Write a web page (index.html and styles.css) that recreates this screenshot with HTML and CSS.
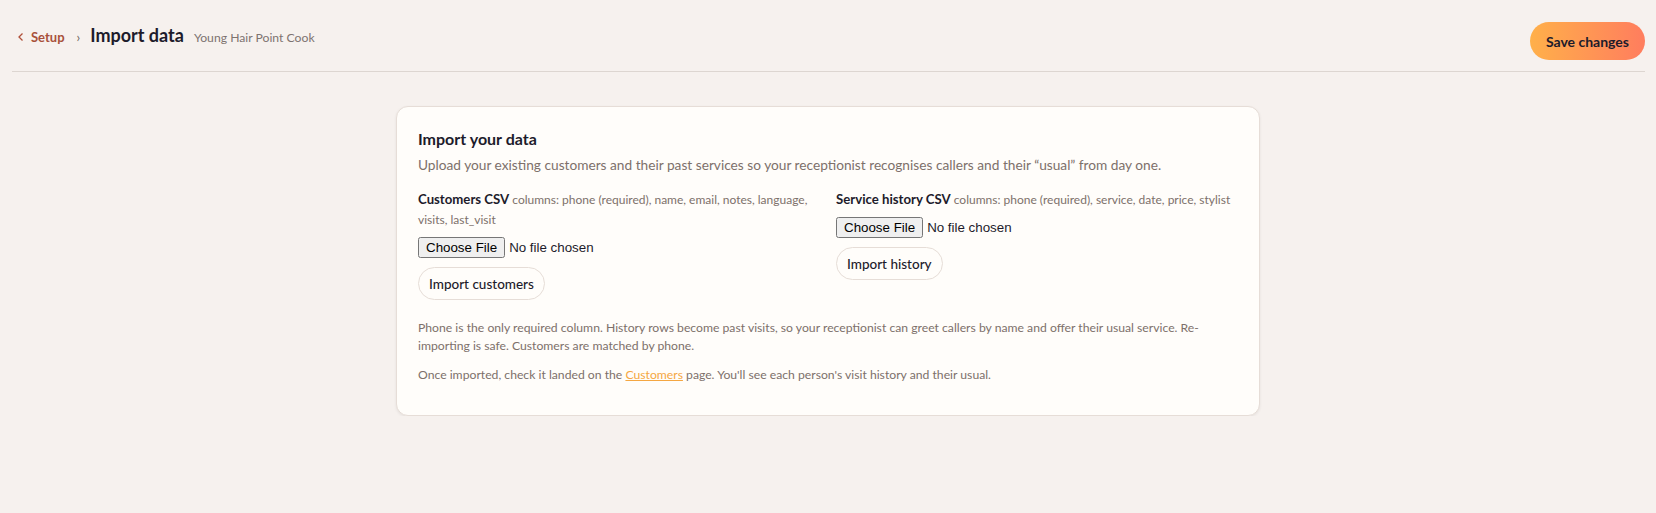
FILE: index.html
```html
<!DOCTYPE html>
<html lang="en">
<head>
    <meta charset="UTF-8">
    <title>Import data</title>
    <link rel="stylesheet" href="styles.css">
</head>
<body>
    <!-- Top bar -->
    <header class="topbar">
        <div class="crumbs">
            <a class="back" href="#">
                <svg width="8" height="10" viewBox="0 0 8 10"><path d="M5.5 1.5 2 5l3.5 3.5" fill="none" stroke="#b0503a" stroke-width="1.3"/></svg>
                Setup
            </a>
            <span class="sep">›</span>
            <h1 class="page-title">Import data</h1>
            <span class="salon">Young Hair Point Cook</span>
        </div>
        <button class="btn-save">Save changes</button>
    </header>

    <main class="wrap">
        <section class="card">
            <h2 class="card-title">Import your data</h2>
            <p class="card-desc">Upload your existing customers and their past services so your receptionist recognises callers and their “usual” from day one.</p>

            <div class="cols">
                <div class="col">
                    <div class="label"><strong>Customers CSV</strong> columns: phone (required), name, email, notes, language, visits, last_visit</div>
                    <input type="file" class="file">
                    <button class="btn-pill">Import customers</button>
                </div>
                <div class="col">
                    <div class="label"><strong>Service history CSV</strong> columns: phone (required), service, date, price, stylist</div>
                    <input type="file" class="file">
                    <button class="btn-pill">Import history</button>
                </div>
            </div>

            <p class="note">Phone is the only required column. History rows become past visits, so your receptionist can greet callers by name and offer their usual service. Re-importing is safe. Customers are matched by phone.</p>
            <p class="note">Once imported, check it landed on the <a href="#">Customers</a> page. You'll see each person's visit history and their usual.</p>
        </section>
    </main>
</body>
</html>
```

FILE: styles.css
```css
body {
    margin: 0;
    background: #f6f1ee;
    font-family: "Segoe UI", Lato, "Noto Sans", Arial, sans-serif;
    color: #1d1b2b;
}
.topbar {
    margin: 0 11px 0 12px;
    padding: 22px 0 11px 5px;
    border-bottom: 1px solid #ddd6d1;
    display: flex;
    justify-content: space-between;
    align-items: flex-start;
}
.crumbs {
    display: flex;
    align-items: baseline;
    line-height: 26px;
}
.back {
    color: #a8503a;
    text-decoration: none;
    font-size: 13px;
    font-weight: 700;
    display: flex;
    align-items: center;
    gap: 6px;
}
.sep {
    color: #6f6660;
    font-size: 13px;
    margin: 0 10px 0 12px;
}
.page-title {
    margin: 0;
    font-size: 18px;
    font-weight: 700;
}
.salon {
    margin-left: 10px;
    font-size: 12.2px;
    color: #7d7370;
}
.btn-save {
    height: 38px;
    padding: 0 16px;
    border: none;
    border-radius: 19px;
    background: linear-gradient(90deg, #ffb04a 0%, #ff7d5e 100%);
    color: #1d1b2b;
    font-family: inherit;
    font-size: 14px;
    font-weight: 700;
}
.wrap {
    display: flex;
    justify-content: center;
    padding-top: 34px;
}
.card {
    width: 820px;
    padding: 21px 21px 31px;
    background: #fffdfa;
    border: 1px solid #e6ddd7;
    border-radius: 12px;
    box-shadow: 0 1px 3px #00000012;
}
.card-title {
    margin: 0;
    font-size: 16px;
    font-weight: 700;
    line-height: 22px;
}
.card-desc {
    margin: 5px 0 0;
    font-size: 13.7px;
    color: #7d706a;
    line-height: 20px;
}
.cols {
    display: grid;
    grid-template-columns: 1fr 1fr;
    gap: 16px;
    margin-top: 14px;
}
.col {
    display: flex;
    flex-direction: column;
    align-items: flex-start;
}
.label {
    font-size: 12px;
    color: #7d706a;
    line-height: 20px;
}
.label strong {
    font-size: 13.2px;
    font-weight: 700;
    color: #1d1b2b;
}
.file {
    margin-top: 7px;
    font-family: "Liberation Sans", Arial, sans-serif;
    font-size: 13.33px;
}
.btn-pill {
    margin-top: 9px;
    height: 33px;
    padding: 0 10px;
    border: 1px solid #e6ddd7;
    border-radius: 17px;
    background: #fffdfa;
    color: #1d1b2b;
    font-family: inherit;
    font-size: 13.5px;
    font-weight: 500;
}
.note {
    margin: 19px 0 0;
    font-size: 12.2px;
    line-height: 18px;
    color: #7d706a;
}
.note + .note {
    margin-top: 11px;
}
.note a {
    color: #f5a742;
}
```
